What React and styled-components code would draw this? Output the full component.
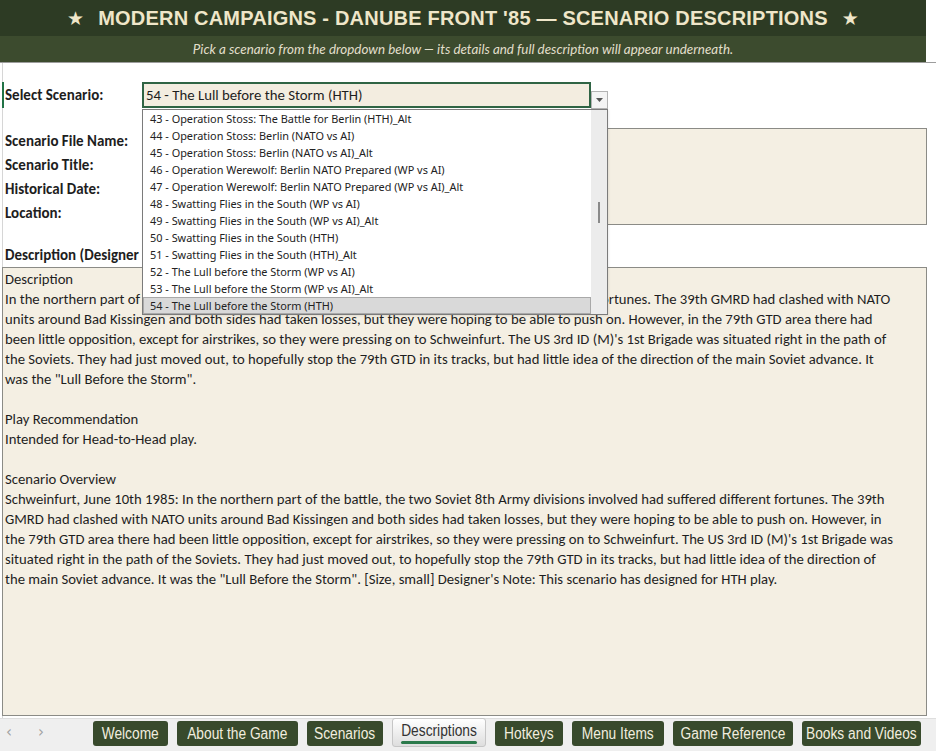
import React from "react";
import styled, { createGlobalStyle } from "styled-components";

const GlobalStyle = createGlobalStyle`
  html, body { margin: 0; padding: 0; background: #ffffff; }
  body {
    width: 936px; height: 751px; overflow: hidden;
    font-family: Carlito, Lato, "Liberation Sans", sans-serif;
    color: #1e1e1e;
  }
`;

const Page = styled.div`
  width: 936px;
  height: 751px;
  display: flex;
  flex-direction: column;
`;

const HeaderWrap = styled.header`
  border-bottom: 1px solid #9d9d9d;
`;

const Header = styled.div`
  width: 926px;
`;

const TitleBar = styled.div`
  height: 36px;
  background: #2d3b24;
  display: flex;
  align-items: center;
  justify-content: center;
  gap: 14px;
  color: #efe6c9;
  font-family: "Liberation Sans", Arial, sans-serif;
  font-weight: 700;
  font-size: 20px;
  letter-spacing: 0.2px;
`;

const Star = styled.span`
  font-size: 19px;
  font-family: "DejaVu Sans", sans-serif;
`;

const SubBar = styled.div`
  height: 26px;
  background: #3c4b2e;
  display: flex;
  align-items: center;
  justify-content: center;
  color: #e2dfcb;
  font-family: Lato, "Liberation Sans", sans-serif;
  font-style: italic;
  font-size: 13.4px;
`;

const Sheet = styled.main`
  flex: 0 0 655px;
  position: relative;
  background: linear-gradient(#d6d6d6, #d6d6d6) 2px 0 / 1px 100% no-repeat;
`;

const SelectRow = styled.div`
  margin-top: 19px;
  height: 26px;
  display: grid;
  grid-template-columns: 142px 449px 17px;
`;

const Label = styled.div`
  position: relative;
  display: flex;
  align-items: center;
  padding: ${(p) => p.$pad || "0"} 0 0 5px;
  font-weight: 700;
  font-size: 15px;
  white-space: nowrap;
  overflow: hidden;
  ${(p) =>
    p.$active &&
    `&::before { content: ""; position: absolute; left: 2px; top: 0; bottom: -1px; width: 2px; background: #217346; }`}
`;

const SelectBox = styled.div`
  box-sizing: border-box;
  background: #f3ede0;
  border: 2px solid #2f6444;
  display: flex;
  align-items: center;
  padding-left: 2px;
  font-size: 14.8px;
  white-space: nowrap;
`;

const ArrowBtn = styled.div`
  align-self: end;
  margin-bottom: -1px;
  box-sizing: border-box;
  height: 18px;
  border: 1px solid #b3b3b3;
  background: #f4f4f4;
  display: flex;
  align-items: center;
  justify-content: center;
`;

const InfoSection = styled.div`
  margin-top: 20px;
  display: grid;
  grid-template-columns: 142px 785px;
  grid-template-rows: repeat(4, 24px);
`;

const InfoBox = styled.div`
  grid-column: 2;
  grid-row: 1 / span 4;
  box-sizing: border-box;
  background: #f4efe3;
  border: 1px solid #8b8b86;
  height: 97px;
`;

const DescLabel = styled(Label)`
  margin-top: 19px;
  height: 24px;
`;

const DescBox = styled.section`
  margin-left: 2px;
  width: 925px;
  height: 449px;
  box-sizing: border-box;
  background: #f4efe3;
  border: 1px solid #8b8b86;
  padding: 1px 0 0 2px;
  font-size: 14.7px;
  line-height: 20px;
`;

const Line = styled.div`
  white-space: nowrap;
  height: 20px;
`;

const Dropdown = styled.div`
  position: absolute;
  left: 142px;
  top: 46px;
  width: 466px;
  height: 206px;
  box-sizing: border-box;
  border: 1px solid #7b7b7b;
  background: #ffffff;
  display: flex;
  box-shadow: 1px 1px 2px rgba(0, 0, 0, 0.08);
`;

const List = styled.div`
  flex: 1;
  display: flex;
  flex-direction: column;
`;

const Item = styled.div`
  box-sizing: border-box;
  height: 17px;
  line-height: 15px;
  padding-left: 6px;
  font-family: "Noto Sans", "Open Sans", sans-serif;
  font-size: 10.9px;
  color: #222;
  white-space: nowrap;
  border: 1px solid ${(p) => (p.$selected ? "#a9a9a9" : "transparent")};
  background: ${(p) => (p.$selected ? "#d9d9d9" : "transparent")};
`;

const ScrollTrack = styled.div`
  width: 16px;
  background: #ececec;
  display: flex;
  justify-content: center;
`;

const ScrollThumb = styled.div`
  margin-top: 92px;
  width: 2px;
  height: 21px;
  background: #8a8a8a;
`;

const TabBar = styled.footer`
  flex: 1;
  background: #efefef;
  border-top: 1px solid #dedede;
  display: flex;
  align-items: flex-start;
  padding-top: 2px;
  padding-left: 3px;
`;

const NavArrow = styled.span`
  width: 12px;
  margin-right: ${(p) => p.$gap || 0}px;
  line-height: 22px;
  text-align: center;
  color: #a0a0a0;
  font-family: "DejaVu Sans", sans-serif;
  font-size: 15px;
`;

const Tabs = styled.div`
  margin-left: 46px;
  display: flex;
  gap: 9px;
  align-items: flex-start;
`;

const Tab = styled.div`
  box-sizing: border-box;
  width: ${(p) => p.$w}px;
  height: 25px;
  border-radius: 3px;
  background: #384a2c;
  color: #f1eddf;
  display: flex;
  align-items: center;
  justify-content: center;
  font-family: "Liberation Sans", Arial, sans-serif;
  font-size: 16px;
  white-space: nowrap;
`;

const TabText = styled.span`
  display: inline-block;
  transform: scaleX(0.86);
`;

const ActiveTab = styled(Tab)`
  height: 29px;
  margin-top: -3px;
  background: linear-gradient(#ffffff, #dedede);
  border: 1px solid #c6c6c6;
  color: #333;
  flex-direction: column;
  justify-content: flex-start;
  padding-top: 3px;
  gap: 1px;
  &::after {
    content: "";
    width: 76px;
    height: 3px;
    border-radius: 2px;
    background: #2b7a4b;
  }
`;

const items = [
  "43 - Operation Stoss: The Battle for Berlin (HTH)_Alt",
  "44 - Operation Stoss: Berlin (NATO vs AI)",
  "45 - Operation Stoss: Berlin (NATO vs AI)_Alt",
  "46 - Operation Werewolf: Berlin NATO Prepared (WP vs AI)",
  "47 - Operation Werewolf: Berlin NATO Prepared (WP vs AI)_Alt",
  "48 - Swatting Flies in the South (WP vs AI)",
  "49 - Swatting Flies in the South (WP vs AI)_Alt",
  "50 - Swatting Flies in the South (HTH)",
  "51 - Swatting Flies in the South (HTH)_Alt",
  "52 - The Lull before the Storm (WP vs AI)",
  "53 - The Lull before the Storm (WP vs AI)_Alt",
  "54 - The Lull before the Storm (HTH)",
];

const lines = [
  "Description",
  "In the northern part of the battle, the two Soviet 8th Army divisions involved had suffered different fortunes. The 39th GMRD had clashed with NATO",
  "units around Bad Kissingen and both sides had taken losses, but they were hoping to be able to push on. However, in the 79th GTD area there had",
  "been little opposition, except for airstrikes, so they were pressing on to Schweinfurt. The US 3rd ID (M)'s 1st Brigade was situated right in the path of",
  "the Soviets. They had just moved out, to hopefully stop the 79th GTD in its tracks, but had little idea of the direction of the main Soviet advance. It",
  "was the \"Lull Before the Storm\".",
  "",
  "Play Recommendation",
  "Intended for Head-to-Head play.",
  "",
  "Scenario Overview",
  "Schweinfurt, June 10th 1985: In the northern part of the battle, the two Soviet 8th Army divisions involved had suffered different fortunes. The 39th",
  "GMRD had clashed with NATO units around Bad Kissingen and both sides had taken losses, but they were hoping to be able to push on. However, in",
  "the 79th GTD area there had been little opposition, except for airstrikes, so they were pressing on to Schweinfurt. The US 3rd ID (M)'s 1st Brigade was",
  "situated right in the path of the Soviets. They had just moved out, to hopefully stop the 79th GTD in its tracks, but had little idea of the direction of",
  "the main Soviet advance. It was the \"Lull Before the Storm\". [Size, small] Designer's Note: This scenario has designed for HTH play.",
];

const tabs = [
  ["Welcome", 75],
  ["About the Game", 121],
  ["Scenarios", 76],
  ["Descriptions", 94, true],
  ["Hotkeys", 68],
  ["Menu Items", 92],
  ["Game Reference", 120],
  ["Books and Videos", 119],
];

export default function App() {
  return (
    <Page>
      <GlobalStyle />
      <HeaderWrap>
        <Header>
          <TitleBar>
            <Star>★</Star>
            <span>MODERN CAMPAIGNS - DANUBE FRONT '85 — SCENARIO DESCRIPTIONS</span>
            <Star>★</Star>
          </TitleBar>
          <SubBar>
            Pick a scenario from the dropdown below — its details and full description will appear underneath.
          </SubBar>
        </Header>
      </HeaderWrap>

      <Sheet>
        <SelectRow>
          <Label $active>Select Scenario:</Label>
          <SelectBox>54 - The Lull before the Storm (HTH)</SelectBox>
          <ArrowBtn>
            <svg width="7" height="4" viewBox="0 0 7 4">
              <path d="M0 0 H7 L3.5 4 Z" fill="#555" />
            </svg>
          </ArrowBtn>
        </SelectRow>

        <InfoSection>
          <Label $pad="2px">Scenario File Name:</Label>
          <InfoBox />
          <Label $pad="2px">Scenario Title:</Label>
          <Label $pad="2px">Historical Date:</Label>
          <Label $pad="2px">Location:</Label>
        </InfoSection>

        <DescLabel>Description (Designer Notes):</DescLabel>
        <DescBox>
          {lines.map((l, i) => (
            <Line key={i}>{l}</Line>
          ))}
        </DescBox>

        <Dropdown>
          <List>
            {items.map((t, i) => (
              <Item key={t} $selected={i === items.length - 1}>
                {t}
              </Item>
            ))}
          </List>
          <ScrollTrack>
            <ScrollThumb />
          </ScrollTrack>
        </Dropdown>
      </Sheet>

      <TabBar>
        <NavArrow $gap={20}>‹</NavArrow>
        <NavArrow>›</NavArrow>
        <Tabs>
          {tabs.map(([name, w, active]) =>
            active ? (
              <ActiveTab key={name} $w={w}>
                <TabText>{name}</TabText>
              </ActiveTab>
            ) : (
              <Tab key={name} $w={w}>
                <TabText>{name}</TabText>
              </Tab>
            )
          )}
        </Tabs>
      </TabBar>
    </Page>
  );
}
